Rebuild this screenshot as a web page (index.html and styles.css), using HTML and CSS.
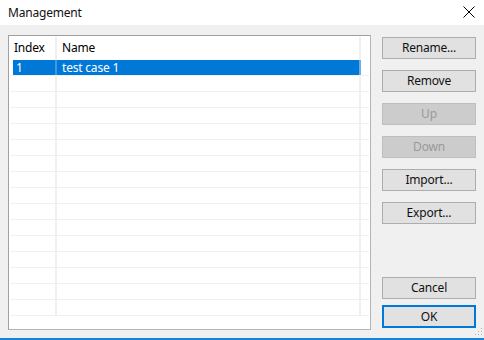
FILE: index.html
```html
<!DOCTYPE html>
<html>
<head>
<meta charset="utf-8">
<link rel="stylesheet" href="styles.css">
</head>
<body>
<div class="window">
  <div class="titlebar">
    <span class="title">Management</span>
    <svg class="close" width="12" height="12" viewBox="0 0 12 12"><path d="M0.5 0.5 L11.5 11.5 M11.5 0.5 L0.5 11.5" stroke="#000" stroke-width="1" fill="none"/></svg>
  </div>
  <div class="content">
    <div class="list">
      <div class="row header">
        <div class="c1">Index</div><div class="c2">Name</div><div class="c3"></div>
      </div>
      <div class="row selected">
        <div class="c1">1</div><div class="c2">test case 1</div><div class="c3"></div>
      </div>
      <div class="row"><div class="c1"></div><div class="c2"></div><div class="c3"></div></div>
      <div class="row"><div class="c1"></div><div class="c2"></div><div class="c3"></div></div>
      <div class="row"><div class="c1"></div><div class="c2"></div><div class="c3"></div></div>
      <div class="row"><div class="c1"></div><div class="c2"></div><div class="c3"></div></div>
      <div class="row"><div class="c1"></div><div class="c2"></div><div class="c3"></div></div>
      <div class="row"><div class="c1"></div><div class="c2"></div><div class="c3"></div></div>
      <div class="row"><div class="c1"></div><div class="c2"></div><div class="c3"></div></div>
      <div class="row"><div class="c1"></div><div class="c2"></div><div class="c3"></div></div>
      <div class="row"><div class="c1"></div><div class="c2"></div><div class="c3"></div></div>
      <div class="row"><div class="c1"></div><div class="c2"></div><div class="c3"></div></div>
      <div class="row"><div class="c1"></div><div class="c2"></div><div class="c3"></div></div>
      <div class="row"><div class="c1"></div><div class="c2"></div><div class="c3"></div></div>
      <div class="row"><div class="c1"></div><div class="c2"></div><div class="c3"></div></div>
      <div class="row"><div class="c1"></div><div class="c2"></div><div class="c3"></div></div>
      <div class="row last"><div class="c1"></div><div class="c2"></div><div class="c3"></div></div>
    </div>
    <div class="buttons">
      <button class="btn">Rename...</button>
      <button class="btn">Remove</button>
      <button class="btn disabled">Up</button>
      <button class="btn disabled">Down</button>
      <button class="btn">Import...</button>
      <button class="btn">Export...</button>
      <div class="spacer"></div>
      <button class="btn">Cancel</button>
      <button class="btn default">OK</button>
    </div>
    <svg class="grip" width="9" height="9" viewBox="0 0 9 9">
      <rect x="7" y="1" width="1" height="1" fill="#b0b0b0"/>
      <rect x="4" y="4" width="1" height="1" fill="#b0b0b0"/>
      <rect x="7" y="4" width="1" height="1" fill="#b0b0b0"/>
      <rect x="1" y="7" width="1" height="1" fill="#b0b0b0"/>
      <rect x="4" y="7" width="1" height="1" fill="#b0b0b0"/>
      <rect x="7" y="7" width="1" height="1" fill="#b0b0b0"/>
    </svg>
  </div>
</div>
</body>
</html>
```
FILE: styles.css
```css
* { box-sizing: border-box; }
html, body { margin: 0; padding: 0; }
body {
  font-family: "Noto Sans", "Open Sans", sans-serif;
  font-size: 12px;
  letter-spacing: -0.2px;
  color: #000;
  background: #fff;
}
.window {
  width: 484px;
  height: 340px;
  display: flex;
  flex-direction: column;
  border-bottom: 2px solid #1883d7;
  overflow: hidden;
}
.titlebar {
  height: 25px;
  flex: none;
  background: #fff;
  display: flex;
  align-items: center;
  justify-content: space-between;
  padding: 0 9px 1px 8px;
}
.title { font-size: 12px; color: #111; }
.close { display: block; }
.content {
  flex: 1;
  background: #f0f0f0;
  display: flex;
  padding: 10px 8px 0 8px;
  position: relative;
}
.list {
  width: 363px;
  height: 295px;
  background: #fff;
  border: 1px solid #a0a0a0;
  border-right-color: #b4b4b4;
  border-bottom-color: #b4b4b4;
  padding-left: 1px;
  overflow: hidden;
  flex: none;
}
.row {
  display: flex;
  width: 359px;
  height: 16px;
  border-bottom: 1px solid #f0f0f0;
  line-height: 15px;
}
.row .c1 {
  width: 47px;
  border-right: 2px solid #f0f0f0;
  padding-left: 4px;
}
.row .c2 {
  width: 304px;
  border-right: 2px solid #f0f0f0;
  padding-left: 5px;
}
.row .c3 { flex: 1; }
.row.header {
  height: 24px;
  border-bottom: none;
  padding-top: 1px;
  line-height: 22px;
}
.row.selected { color: #fff; }
.row.selected .c1 {
  background: linear-gradient(to right, transparent 3px, #0078d7 3px);
  border-right-color: #3f98e0;
  padding-left: 6px;
}
.row.selected .c2 {
  background: #0078d7;
  border-right-color: #6aaee6;
}
.buttons {
  flex: 1;
  display: flex;
  flex-direction: column;
  gap: 11px;
  margin-left: 11px;
  padding-top: 2px;
  padding-bottom: 2px;
  height: 295px;
}
.btn {
  font-family: inherit;
  font-size: 12px;
  letter-spacing: -0.2px;
  height: 22px;
  width: 94px;
  flex: none;
  background: #e1e1e1;
  border: 1px solid #adadad;
  color: #111;
  padding: 0;
  margin: 0;
  line-height: 18px;
  border-radius: 0;
}
.btn.disabled {
  background: #cccccc;
  border-color: #bfbfbf;
  color: #9a9a9a;
}
.btn.default {
  border: 2px solid #0078d7;
  height: 23px;
  margin-top: -5px;
}
.spacer { flex: 1; }
.grip {
  position: absolute;
  right: 1px;
  bottom: 2px;
}
```
